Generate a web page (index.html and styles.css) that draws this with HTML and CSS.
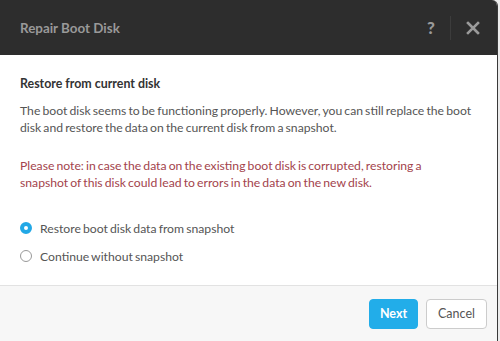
FILE: index.html
```html
<!DOCTYPE html>
<html lang="en">
<head>
    <meta charset="UTF-8">
    <meta name="viewport" content="width=device-width, initial-scale=1.0">
    <title>Repair Boot Disk</title>
    <link rel="stylesheet" href="styles.css">
</head>
<body>
    <div class="modal">
        <div class="modal-header">
            <h1 class="modal-title">Repair Boot Disk</h1>
            <div class="header-actions">
                <span class="help">?</span>
                <span class="divider"></span>
                <span class="close">
                    <svg width="14" height="14" viewBox="0 0 14 14">
                        <path d="M2 2 L12 12 M12 2 L2 12" stroke="#9a9a9a" stroke-width="2.6" stroke-linecap="square"/>
                    </svg>
                </span>
            </div>
        </div>
        <div class="modal-body">
            <h2 class="section-title">Restore from current disk</h2>
            <p class="text">The boot disk seems to be functioning properly. However, you can still replace the boot disk and restore the data on the current disk from a snapshot.</p>
            <p class="text warning">Please note: in case the data on the existing boot disk is corrupted, restoring a<br>snapshot of this disk could lead to errors in the data on the new disk.</p>
            <ul class="options">
                <li class="option">
                    <span class="radio checked"></span>
                    Restore boot disk data from snapshot
                </li>
                <li class="option">
                    <span class="radio"></span>
                    Continue without snapshot
                </li>
            </ul>
        </div>
        <div class="modal-footer">
            <button class="btn btn-primary">Next</button>
            <button class="btn btn-cancel">Cancel</button>
        </div>
    </div>
</body>
</html>
```

FILE: styles.css
```css
* {
    margin: 0;
    padding: 0;
    box-sizing: border-box;
}

body {
    background-color: #ececec;
    font-family: "Lato", "Open Sans", sans-serif;
    color: #555;
}

.modal {
    width: 498px;
    height: 341px;
    background-color: #fff;
    border-top-right-radius: 6px;
    border-right: 1px solid #3a3a3a;
    overflow: hidden;
    display: flex;
    flex-direction: column;
}

.modal-header {
    height: 55px;
    background-color: #2d2d2d;
    display: flex;
    align-items: center;
    justify-content: space-between;
    padding: 0 17px 0 20px;
}

.modal-title {
    font-size: 13.4px;
    font-weight: 700;
    color: #999;
}

.header-actions {
    display: flex;
    align-items: center;
    gap: 13px;
}

.help {
    font-size: 17px;
    font-weight: 900;
    color: #9a9a9a;
    width: 10px;
}

.divider {
    width: 1px;
    height: 24px;
    background-color: #3c3c3c;
}

.close {
    display: flex;
    margin-left: 2px;
}

.modal-body {
    flex: 1;
    padding: 20px 20px 0 20px;
    font-size: 12.2px;
    word-spacing: -1px;
    border-bottom: 1px solid #e2e2e2;
}

.section-title {
    font-size: 12.4px;
    font-weight: 700;
    color: #333;
    line-height: 17px;
    word-spacing: 0;
}

.text {
    line-height: 17px;
    margin-top: 10px;
}

.warning {
    color: #a3434c;
    margin-top: 21px;
}

.options {
    list-style: none;
    margin-top: 23px;
}

.option {
    display: flex;
    align-items: center;
    gap: 8px;
    height: 28px;
    line-height: 17px;
}

.radio {
    width: 12px;
    height: 12px;
    border-radius: 50%;
    border: 1px solid #999;
    background-color: #fff;
}

.radio.checked {
    border: 4px solid #22a8e6;
}

.modal-footer {
    height: 55px;
    background-color: #f7f7f7;
    display: flex;
    align-items: center;
    justify-content: flex-end;
    gap: 8px;
    padding: 0 10px 0 0;
}

.btn {
    height: 30px;
    border: 1px solid #ccc;
    border-radius: 4px;
    background-color: #fff;
    color: #555;
    font-family: inherit;
    font-size: 12.5px;
}

.btn-cancel {
    width: 61px;
}

.btn-primary {
    width: 49px;
    background-color: #22ade9;
    border-color: #22ade9;
    color: #fff;
    font-weight: 700;
}
```
